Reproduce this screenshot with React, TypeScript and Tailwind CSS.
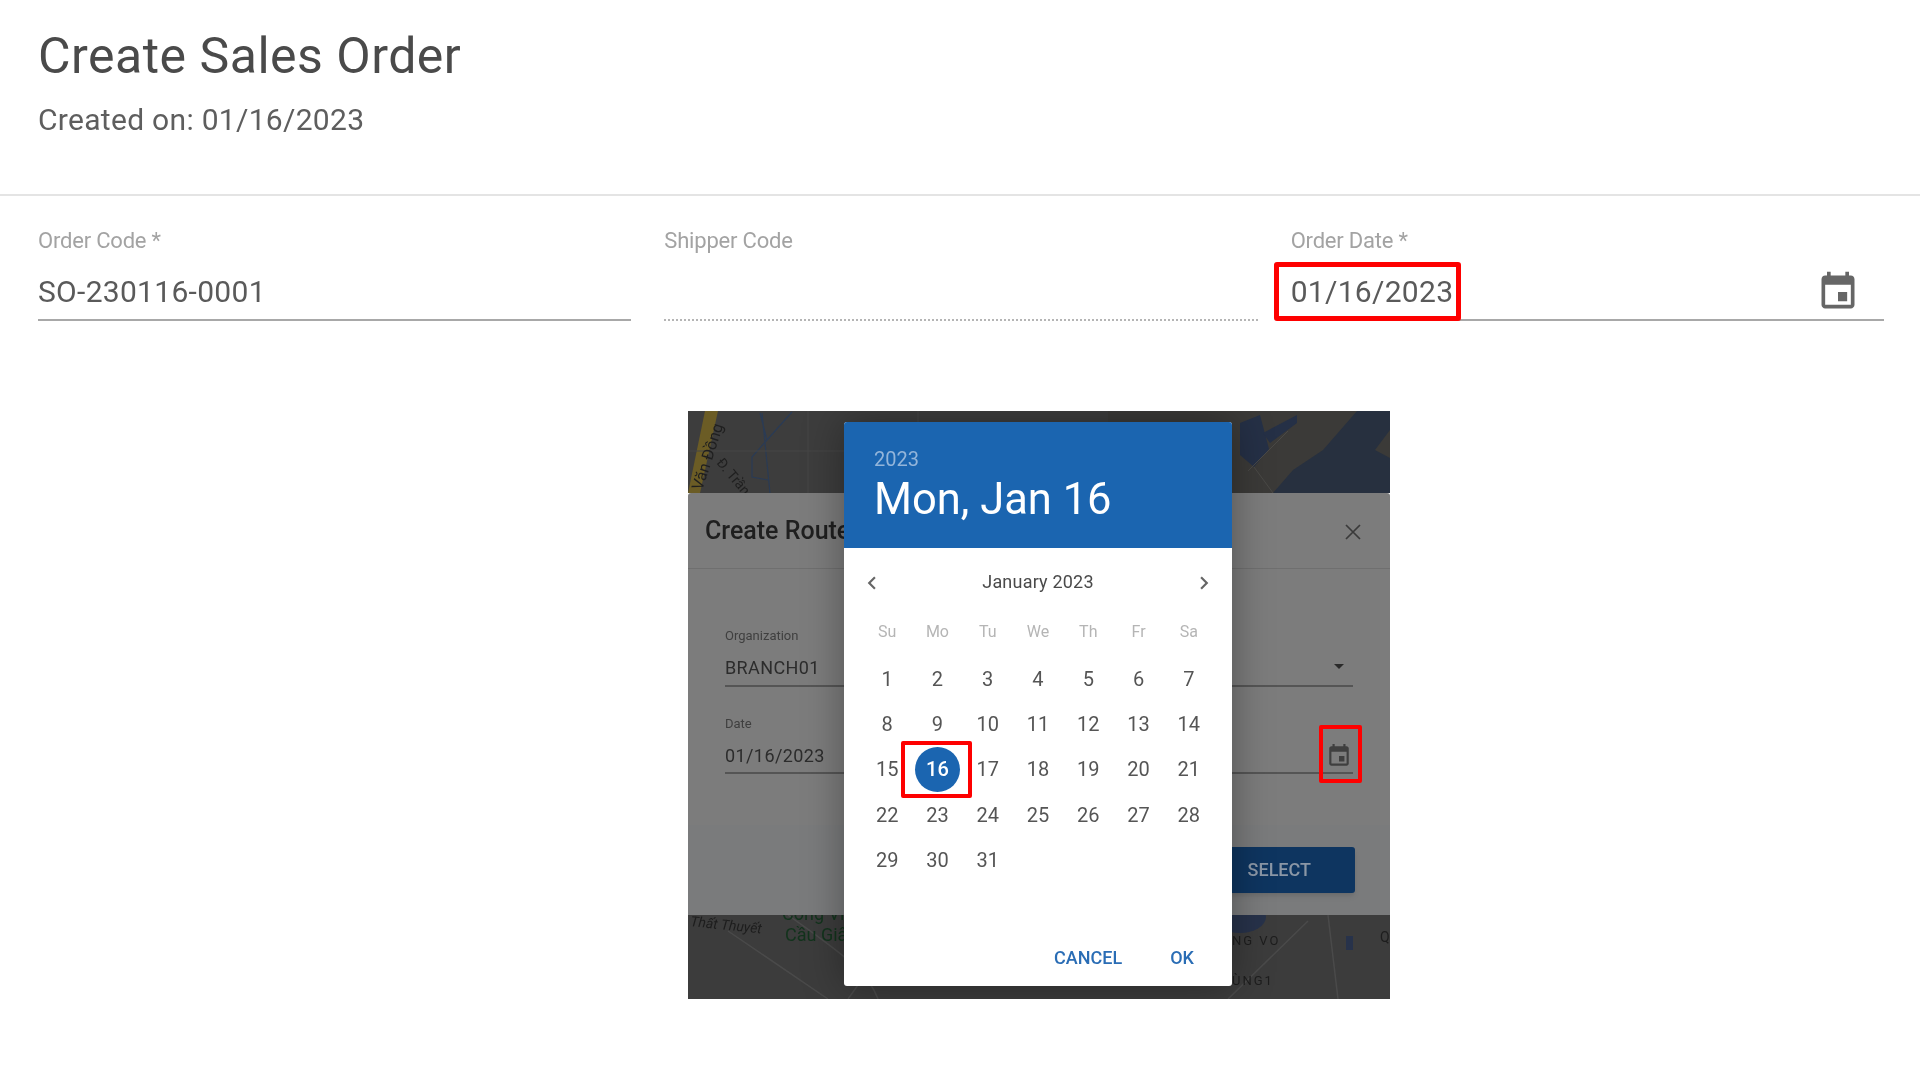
import React from 'react';

const EVENT_ICON =
  'M17 12h-5v5h5v-5zM16 1v2H8V1H6v2H5c-1.11 0-1.99.9-1.99 2L3 19c0 1.1.89 2 2 2h14c1.1 0 2-.9 2-2V5c0-1.1-.9-2-2-2h-1V1h-2zm3 18H5V8h14v11z';

const weekDays = ['Su', 'Mo', 'Tu', 'We', 'Th', 'Fr', 'Sa'];
const days = Array.from({ length: 31 }, (_, i) => i + 1);

const Field: React.FC<{ label: string; value?: string; dotted?: boolean; children?: React.ReactNode }> = ({
  label,
  value,
  dotted,
  children,
}) => (
  <div className="relative">
    <div className="h-[20px] text-[22px] leading-[20px] text-[#a3a3a3] tracking-[-0.2px]">{label}</div>
    <div
      className={`mt-[15px] flex h-[55px] items-center justify-between pb-[2px] text-[30px] leading-[36px] tracking-[0.3px] text-[#5a5a5a] ${
        dotted ? 'border-b-2 border-dotted border-[#b5b5b5]' : 'border-b-2 border-[#a8a8a8]'
      }`}
    >
      <span>{value}</span>
      {children}
    </div>
  </div>
);

const MapBackdrop = () => (
  <svg className="absolute inset-0 h-full w-full" viewBox="0 0 702 588" preserveAspectRatio="none">
    <rect width="702" height="82" fill="#3d3d3d" />
    <path d="M17 0 H30 L12 82 H0Z" fill="#6b5c25" />
    <path d="M72 2 L79 29 L64 46 L64 66 L80 69 M104 1 L79 29 M74 2 L82 82" stroke="#2a3b55" strokeWidth="1.2" fill="none" />
    <path d="M120 0 V82 M0 40 H230 M230 0 V82" stroke="#474747" strokeWidth="1" fill="none" />
    <text x="14" y="80" transform="rotate(-72 14 80)" fontSize="16" fill="#1f1f1f">Văn Đồng</text>
    <text x="28" y="52" transform="rotate(50 28 52)" fontSize="14" fill="#1f1f1f">Đ. Trần</text>

    <rect x="420" y="0" width="282" height="82" fill="#27303f" />
    <path d="M420 0 H669 L635 39 L605 59 L585 82 H420Z" fill="#3b3a38" />
    <path d="M552 12 L572 4 L581 38 L566 56 L552 44Z" fill="#253046" />
    <path d="M609 4 L575 22 L582 32 L609 12Z" fill="#253046" />
    <path d="M687 39 L702 19 V47Z" fill="#3b3a38" />
    <path d="M560 60 L600 20 M585 82 L566 56" stroke="#4a4946" strokeWidth="1" fill="none" />

    <rect y="504" width="702" height="84" fill="#3c3c3c" />
    <path d="M100 504 C150 540 180 560 190 588 M40 520 L140 588 M220 504 L160 588 M540 588 L620 510 M640 504 L650 588" stroke="#4a4a4a" strokeWidth="1.5" fill="none" />
    <text x="2" y="515" transform="rotate(6 2 515)" fontSize="14" fontStyle="italic" fill="#1d1d1d">Thất Thuyết</text>
    <text x="94" y="509" fontSize="18" fill="#12331c">Công Viên</text>
    <text x="97" y="530" fontSize="18" fill="#12331c">Cầu Giấy</text>
    <ellipse cx="552" cy="506" rx="26" ry="16" fill="#27324a" />
    <rect x="658" y="525" width="7" height="14" fill="#27324a" />
    <text x="544" y="534" fontSize="13" letterSpacing="2" fill="#1d1d1d">NG VO</text>
    <text x="544" y="574" fontSize="13" letterSpacing="2" fill="#1d1d1d">ÙNG1</text>
    <text x="692" y="531" fontSize="14" fill="#1d1d1d">Q</text>
  </svg>
);

const RouteModal = () => (
  <div className="relative mt-[82px] flex h-[422px] flex-col rounded-[3px] bg-[#7c7c7c]">
    <div className="flex h-[76px] items-center justify-between border-b border-[#6f6f6f] pl-[17px] pr-[25px]">
      <span className="text-[25px] font-medium text-[#1f1f1f]">Create Route</span>
      <svg viewBox="0 0 24 24" className="mt-[2px] h-[24px] w-[24px]" fill="none" stroke="#3a3a3a" strokeWidth="1.7">
        <path d="M5 5l14 14M19 5L5 19" />
      </svg>
    </div>
    <div className="h-[256px] px-[37px] pt-[59px]">
      <div className="h-[59px] border-b-2 border-[#555555]">
        <div className="text-[13px] leading-[16px] text-[#3f3f3f]">Organization</div>
        <div className="relative mt-[12px] text-[18px] leading-[24px] tracking-[0.4px] text-[#2c2c2c]">
          BRANCH01
          <span className="absolute right-[9px] top-[8px] h-0 w-0 border-x-[5px] border-t-[5px] border-x-transparent border-t-[#2a2a2a]" />
        </div>
      </div>
      <div className="mt-[29px] h-[58px] border-b-2 border-[#555555]">
        <div className="text-[13px] leading-[16px] text-[#3f3f3f]">Date</div>
        <div className="mt-[11px] flex items-center justify-between text-[18px] leading-[24px] tracking-[0.4px] text-[#2c2c2c]">
          01/16/2023
          <svg viewBox="0 0 24 24" className="mr-[1px] h-[26px] w-[26px]" fill="#3f3f3f">
            <path d={EVENT_ICON} />
          </svg>
        </div>
      </div>
    </div>
    <div className="flex flex-1 items-start justify-end bg-[#7a7b7c] pr-[35px] pt-[22px]">
      <div className="flex h-[46px] w-[180px] items-center justify-end rounded-[3px] bg-[#0e3560] pb-[1px] pr-[44px] text-[18px] font-medium text-[#8b97a6] shadow-md">
        SELECT
      </div>
    </div>
  </div>
);

const DatePicker = () => (
  <div className="absolute left-[156px] top-[11px] flex h-[564px] w-[388px] flex-col overflow-hidden rounded-[3px] bg-white shadow-[0_0_40px_rgba(0,0,0,0.35)]">
    <div className="h-[126px] bg-[#1b65b0] px-[30px] pt-[23px] text-white">
      <div className="text-[20px] leading-[28px] text-[#93b5da]">2023</div>
      <div className="pt-[1px] text-[43.5px] leading-[52px]">Mon, Jan 16</div>
    </div>
    <div className="relative flex h-[66px] items-center justify-center text-[18px] tracking-[0.2px] text-[#4a4a4a]">
      <svg viewBox="0 0 24 24" className="absolute left-[15px] top-[22px] h-[26px] w-[26px]" fill="#666666">
        <path d="M15.41 16.59 10.83 12l4.58-4.59L14 6l-6 6 6 6z" />
      </svg>
      January 2023
      <svg viewBox="0 0 24 24" className="absolute right-[15px] top-[22px] h-[26px] w-[26px]" fill="#666666">
        <path d="M8.59 16.59 13.17 12 8.59 7.41 10 6l6 6-6 6z" />
      </svg>
    </div>
    <div className="mx-[18px] grid grid-cols-7 text-[16px] text-[#b5b5b5]">
      {weekDays.map((d) => (
        <div key={d} className="flex h-[36px] items-center justify-center">
          {d}
        </div>
      ))}
    </div>
    <div className="mx-[18px] mt-[6px] grid grid-cols-7 text-[20px] text-[#555555]">
      {days.map((d) => (
        <div key={d} className="relative flex h-[45.4px] items-center justify-center">
          {d === 16 ? (
            <>
              <span className="flex h-[45px] w-[45px] items-center justify-center rounded-full bg-[#1b65b0] font-medium text-white">
                16
              </span>
              <span className="absolute left-[-11px] top-[-6px] h-[57px] w-[71px] rounded-[2px] border-[4px] border-[#fe0000]" />
            </>
          ) : (
            d
          )}
        </div>
      ))}
    </div>
    <div className="mt-auto flex h-[42px] items-start justify-end gap-[48px] pr-[38px] text-[18px] font-medium text-[#2a6db5]">
      <span>CANCEL</span>
      <span>OK</span>
    </div>
  </div>
);

export default function App() {
  return (
    <div className="min-h-screen bg-white font-['Roboto',sans-serif] blur-[0.5px]">
      <div className="h-[196px] border-b-2 border-[#e4e4e4] pl-[38px] pt-[28px]">
        <h1 className="text-[50px] leading-[56px] tracking-[0.5px] text-[#4a4a4a]">Create Sales Order</h1>
        <p className="mt-[18px] text-[30px] leading-[36px] tracking-[0.3px] text-[#5e5e5e]">Created on: 01/16/2023</p>
      </div>

      <div className="grid grid-cols-3 gap-x-[33px] pl-[38px] pr-[36px] pt-[35px]">
        <Field label="Order Code *" value="SO-230116-0001" />
        <Field label="Shipper Code" dotted />
        <Field label="Order Date *" value="01/16/2023">
          <svg viewBox="0 0 24 24" className="mr-[24px] h-[44px] w-[44px]" fill="#666666">
            <path d={EVENT_ICON} />
          </svg>
          <span className="absolute left-[-17px] top-[31px] h-[59px] w-[187px] rounded-[3px] border-[5px] border-[#fe0000]" />
        </Field>
      </div>

      <div className="relative ml-[688px] mt-[90px] flex h-[588px] w-[702px] flex-col overflow-hidden">
        <MapBackdrop />
        <RouteModal />
        <DatePicker />
        <span className="absolute left-[631px] top-[314px] h-[58px] w-[43px] rounded-[2px] border-[4px] border-[#fe0000]" />
      </div>
    </div>
  );
}
